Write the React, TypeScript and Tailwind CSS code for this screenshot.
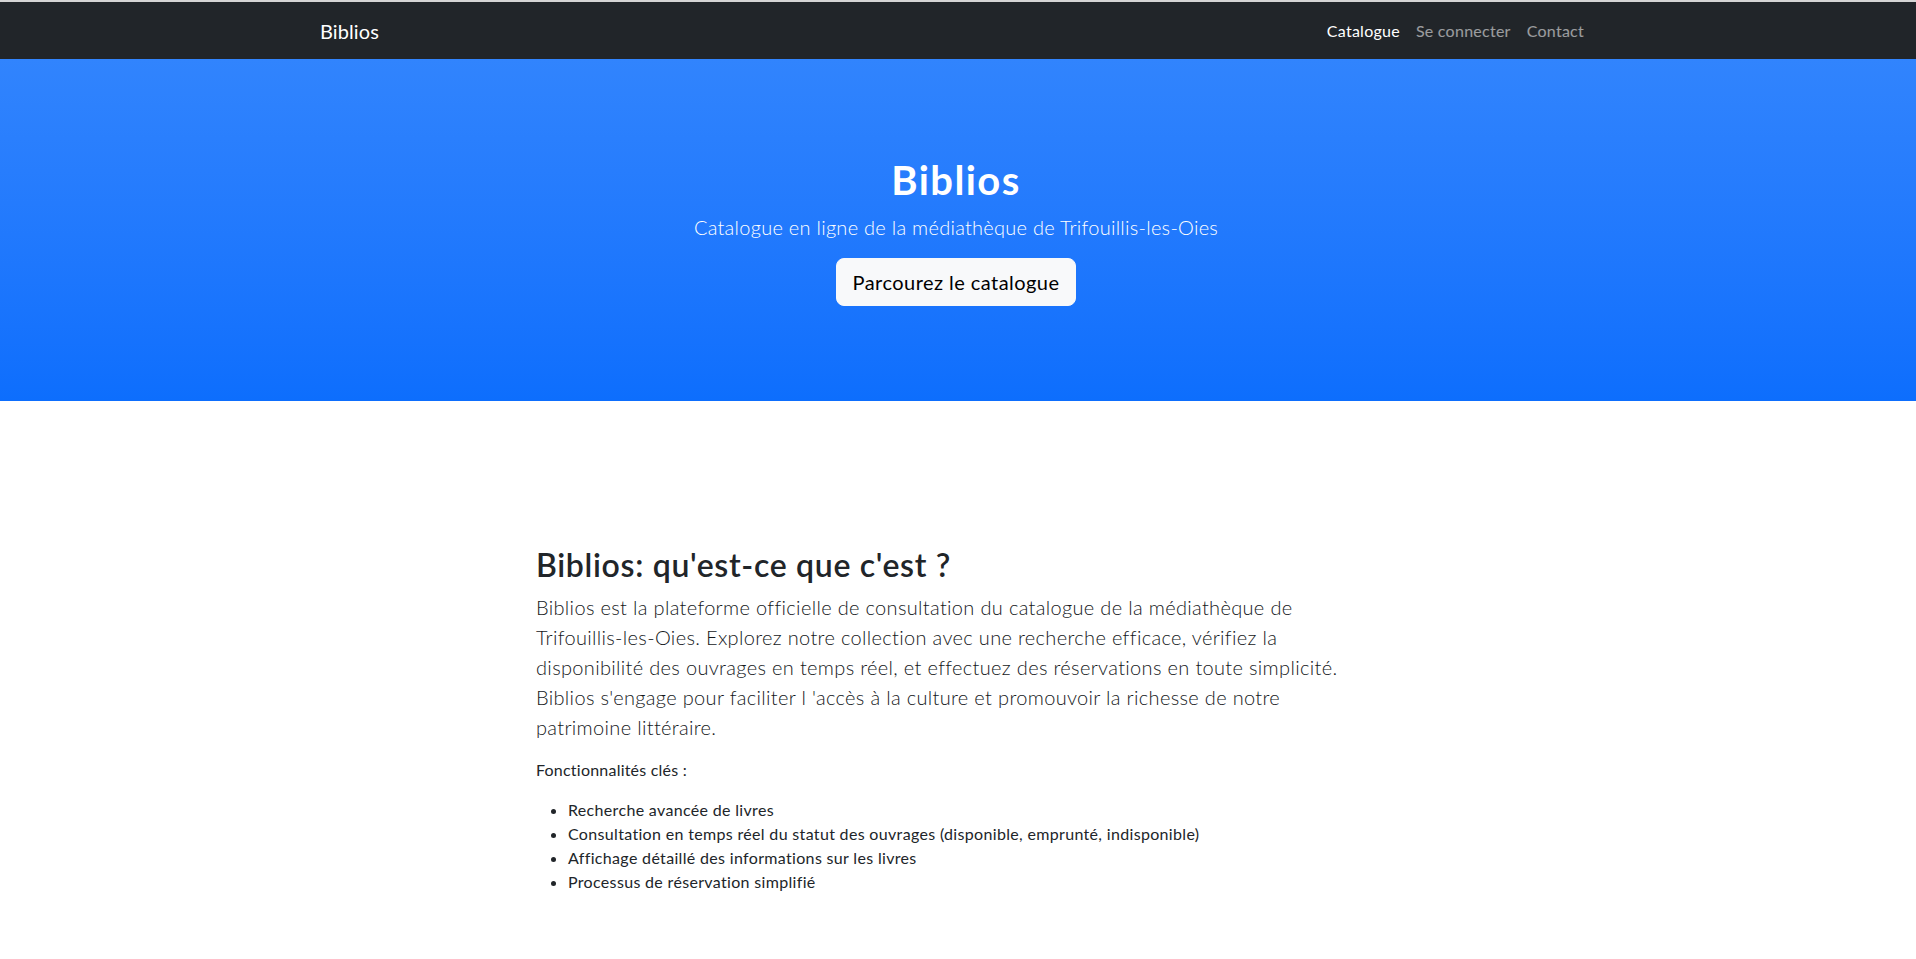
import React from "react";

export default function App() {
  const font = { fontFamily: "Lato, 'Noto Sans', sans-serif" };
  return (
    <div className="min-h-screen bg-white" style={font}>
      <div className="h-[2px] bg-[#d4d4d4]" />
      <nav className="h-[57px] bg-[#212529]">
        <div className="mx-auto flex h-full w-[1278px] items-center justify-between pl-[1px] pr-[5px]">
          <span className="text-[20px] leading-[30px] tracking-[0.1px] text-white">Biblios</span>
          <div className="flex items-center text-[16px] leading-[24px] tracking-[0.26px]">
            <span className="px-2 text-white">Catalogue</span>
            <span className="px-2 text-white/55">Se connecter</span>
            <span className="px-2 text-white/55">Contact</span>
          </div>
        </div>
      </nav>
      <header className="flex h-[342px] flex-col items-center bg-gradient-to-b from-[#3184fd] to-[#0d6efd] pt-[97px] pr-[4px] text-center text-white">
        <h1 className="mb-2 text-[40px] font-bold leading-[48px] tracking-[1.4px]">Biblios</h1>
        <p className="mb-4 text-[20px] font-light leading-[30px] tracking-[0.27px]">
          Catalogue en ligne de la médiathèque de Trifouillis-les-Oies
        </p>
        <button className="h-[48px] rounded-lg border border-[#f8f9fa] bg-[#f8f9fa] px-4 text-[20px] leading-[30px] tracking-[0.45px] text-black">
          Parcourez le catalogue
        </button>
      </header>
      <main className="mx-auto w-[844px] pt-[145px] pb-16 text-[#212529]">
        <h2 className="mb-2 text-[32px] font-semibold leading-[38px] tracking-[0.68px]">
          Biblios: qu'est-ce que c'est ?
        </h2>
        <p className="mb-4 whitespace-nowrap text-[20px] font-light leading-[30px] tracking-[0.33px] text-[#15181b]">
          Biblios est la plateforme officielle de consultation du catalogue de la médiathèque de
          <br />
          Trifouillis-les-Oies. Explorez notre collection avec une recherche efficace, vérifiez la
          <br />
          disponibilité des ouvrages en temps réel, et effectuez des réservations en toute simplicité.
          <br />
          Biblios s'engage pour faciliter l 'accès à la culture et promouvoir la richesse de notre
          <br />
          patrimoine littéraire.
        </p>
        <p className="mb-4 text-[16px] leading-[24px] tracking-[0.22px]">Fonctionnalités clés :</p>
        <ul className="list-disc pl-8 text-[16px] leading-[24px] tracking-[0.33px]">
          <li>Recherche avancée de livres</li>
          <li>Consultation en temps réel du statut des ouvrages (disponible, emprunté, indisponible)</li>
          <li>Affichage détaillé des informations sur les livres</li>
          <li>Processus de réservation simplifié</li>
        </ul>
      </main>
    </div>
  );
}
